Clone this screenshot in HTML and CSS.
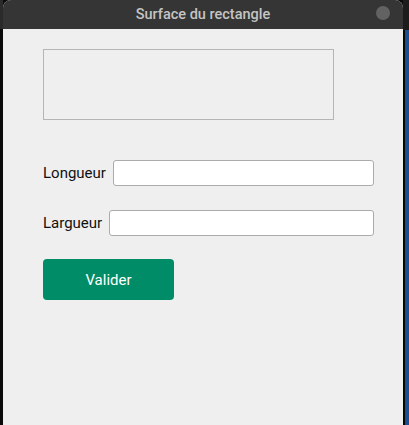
FILE: index.html
```html
<!DOCTYPE html>
<html lang="fr">
<head>
<meta charset="utf-8">
<title>Surface du rectangle</title>
<link rel="stylesheet" href="styles.css">
</head>
<body>
<div class="screen">
  <div class="left-edge"></div>
  <div class="window">
    <div class="titlebar">
      <span class="title">Surface du rectangle</span>
      <span class="dot"></span>
    </div>
    <div class="content">
      <div class="canvas"></div>
      <div class="row row-first">
        <label class="label" for="longueur">Longueur</label>
        <input class="field" id="longueur" type="text">
      </div>
      <div class="row row-second">
        <label class="label" for="largueur">Largueur</label>
        <input class="field" id="largueur" type="text">
      </div>
      <button class="btn" type="button">Valider</button>
    </div>
  </div>
  <div class="right-edge">
    <div class="right-top"></div>
    <div class="right-blue"></div>
  </div>
</div>
</body>
</html>
```

FILE: styles.css
```css
* { box-sizing: border-box; }
html, body { margin: 0; padding: 0; background: #0a0a0a; }
body { width: 409px; height: 425px; overflow: hidden; font-family: Roboto, "Liberation Sans", sans-serif; }

.screen { display: flex; height: 425px; }

.left-edge {
  width: 3px;
  background: linear-gradient(#2a2a2a 0 29px, #0a0a0a 29px);
}

.window {
  width: 400px;
  display: flex;
  flex-direction: column;
  background: #efefef;
  border-radius: 8px 8px 0 0;
  overflow: hidden;
}

.titlebar {
  position: relative;
  height: 29px;
  background: #353535;
  display: flex;
  align-items: center;
  justify-content: center;
}
.title {
  color: #c4c4c4;
  font-size: 14.5px;
  font-weight: 500;
  letter-spacing: 0;
}
.dot {
  position: absolute;
  right: 13px;
  top: 6px;
  width: 14px;
  height: 14px;
  border-radius: 50%;
  background: #626262;
}

.content {
  flex: 1;
  padding: 20px 29px 0 40px;
  display: flex;
  flex-direction: column;
  align-items: flex-start;
}

.canvas {
  width: 291px;
  height: 71px;
  border: 1px solid #b5b5b5;
}

.row {
  display: flex;
  align-items: center;
  gap: 7px;
  width: 100%;
}
.row-first { margin-top: 40px; }
.row-second { margin-top: 24px; }

.label {
  font-size: 15px;
  color: #111;
}

.field {
  flex: 1;
  height: 26px;
  border: 1px solid #ababab;
  border-radius: 3px;
  background: #fff;
  padding: 0 4px;
  font: inherit;
}

.btn {
  margin-top: 23px;
  width: 131px;
  height: 41px;
  border: 0;
  border-radius: 4px;
  background: #008c66;
  color: #fff;
  font-family: Roboto, "Liberation Sans", sans-serif;
  font-size: 15px;
}

.right-edge {
  width: 6px;
  display: flex;
  flex-direction: column;
}
.right-top { height: 30px; background: #1c1c1c; }
.right-blue {
  flex: 1;
  background: #1a4f8f;
  border-left: 2px solid #050505;
}
```
